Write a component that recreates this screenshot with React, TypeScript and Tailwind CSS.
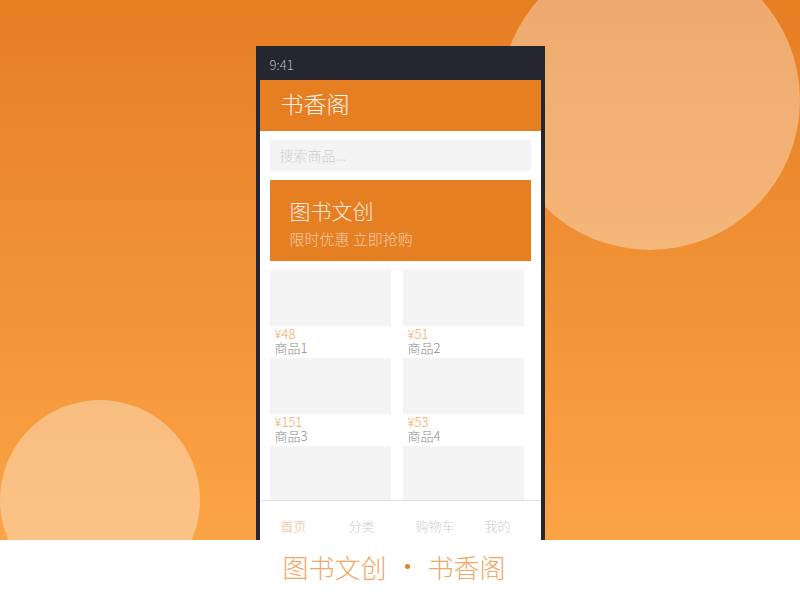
import React from "react";

const products = [
  { price: "¥48", name: "商品1" },
  { price: "¥51", name: "商品2" },
  { price: "¥151", name: "商品3" },
  { price: "¥53", name: "商品4" },
];

export default function App() {
  return (
    <div
      className="relative w-[800px] h-[600px] overflow-hidden bg-white font-light"
      style={{ fontFamily: '"Noto Sans CJK SC", "Noto Sans", sans-serif' }}
    >
      <div className="relative h-[540px] overflow-hidden bg-gradient-to-b from-[#e67e22] to-[#fba446]">
        <div className="absolute left-[500px] top-[-50px] w-[300px] h-[300px] rounded-full bg-white/35" />
        <div className="absolute left-0 top-[400px] w-[200px] h-[200px] rounded-full bg-white/35" />

        <div className="relative mx-auto mt-[46px] w-[289px] h-[494px] bg-[#262630] flex flex-col">
          <div className="h-[34px] flex items-center pl-[14px] pt-[4px] text-[13px] text-[#b8b8bf]">9:41</div>
          <div className="mx-[4px] flex-1 bg-white flex flex-col overflow-hidden">
            <div className="h-[51px] shrink-0 bg-[#e67e22] flex items-center pl-[21px] pb-[5px] text-[23px] text-white/90">
              书香阁
            </div>
            <div className="flex-1 flex flex-col px-[10px] pt-[9px] gap-[9px] overflow-hidden">
              <div className="h-[31px] shrink-0 bg-[#f4f4f4] flex items-center pl-[10px] text-[14px] text-[#cfcfcf]">
                搜索商品...
              </div>
              <div className="h-[81px] shrink-0 bg-[#e67e22] flex flex-col justify-center pl-[20px] pt-[4px] gap-[7px]">
                <div className="text-[21px] leading-[26px] text-white/85">图书文创</div>
                <div className="text-[15px] leading-[18px] text-white/60">限时优惠 立即抢购</div>
              </div>
              <div className="grid grid-cols-[121px_121px] gap-x-[12px] w-[254px]">
                {products.map((p) => (
                  <div key={p.name} className="h-[88px] flex flex-col">
                    <div className="h-[56px] bg-[#f4f4f4]" />
                    <div className="pl-[5px] pt-[1px] text-[13px] leading-[14px] text-[#f5a55e]">{p.price}</div>
                    <div className="pl-[5px] text-[13px] leading-[14px] text-[#8a8a8a]">{p.name}</div>
                  </div>
                ))}
                <div className="h-[56px] bg-[#f4f4f4]" />
                <div className="h-[56px] bg-[#f4f4f4]" />
              </div>
            </div>
            <div className="h-[40px] shrink-0 border-t border-[#e3e3e3] flex items-start pl-[21px] pt-[16px] text-[13px] leading-[18px] text-[#cccccc]">
              <span className="w-[68px] text-[#f6b27a]">首页</span>
              <span className="w-[67px]">分类</span>
              <span className="w-[69px]">购物车</span>
              <span>我的</span>
            </div>
          </div>
        </div>
      </div>
      <div className="h-[60px] flex items-center justify-center gap-[18px] pb-[7px] pr-[12px] text-[26px] text-[#f2a766]">
        <span>图书文创</span>
        <span className="w-[5px] h-[5px] rounded-full bg-[#e67e22]" />
        <span>书香阁</span>
      </div>
    </div>
  );
}
